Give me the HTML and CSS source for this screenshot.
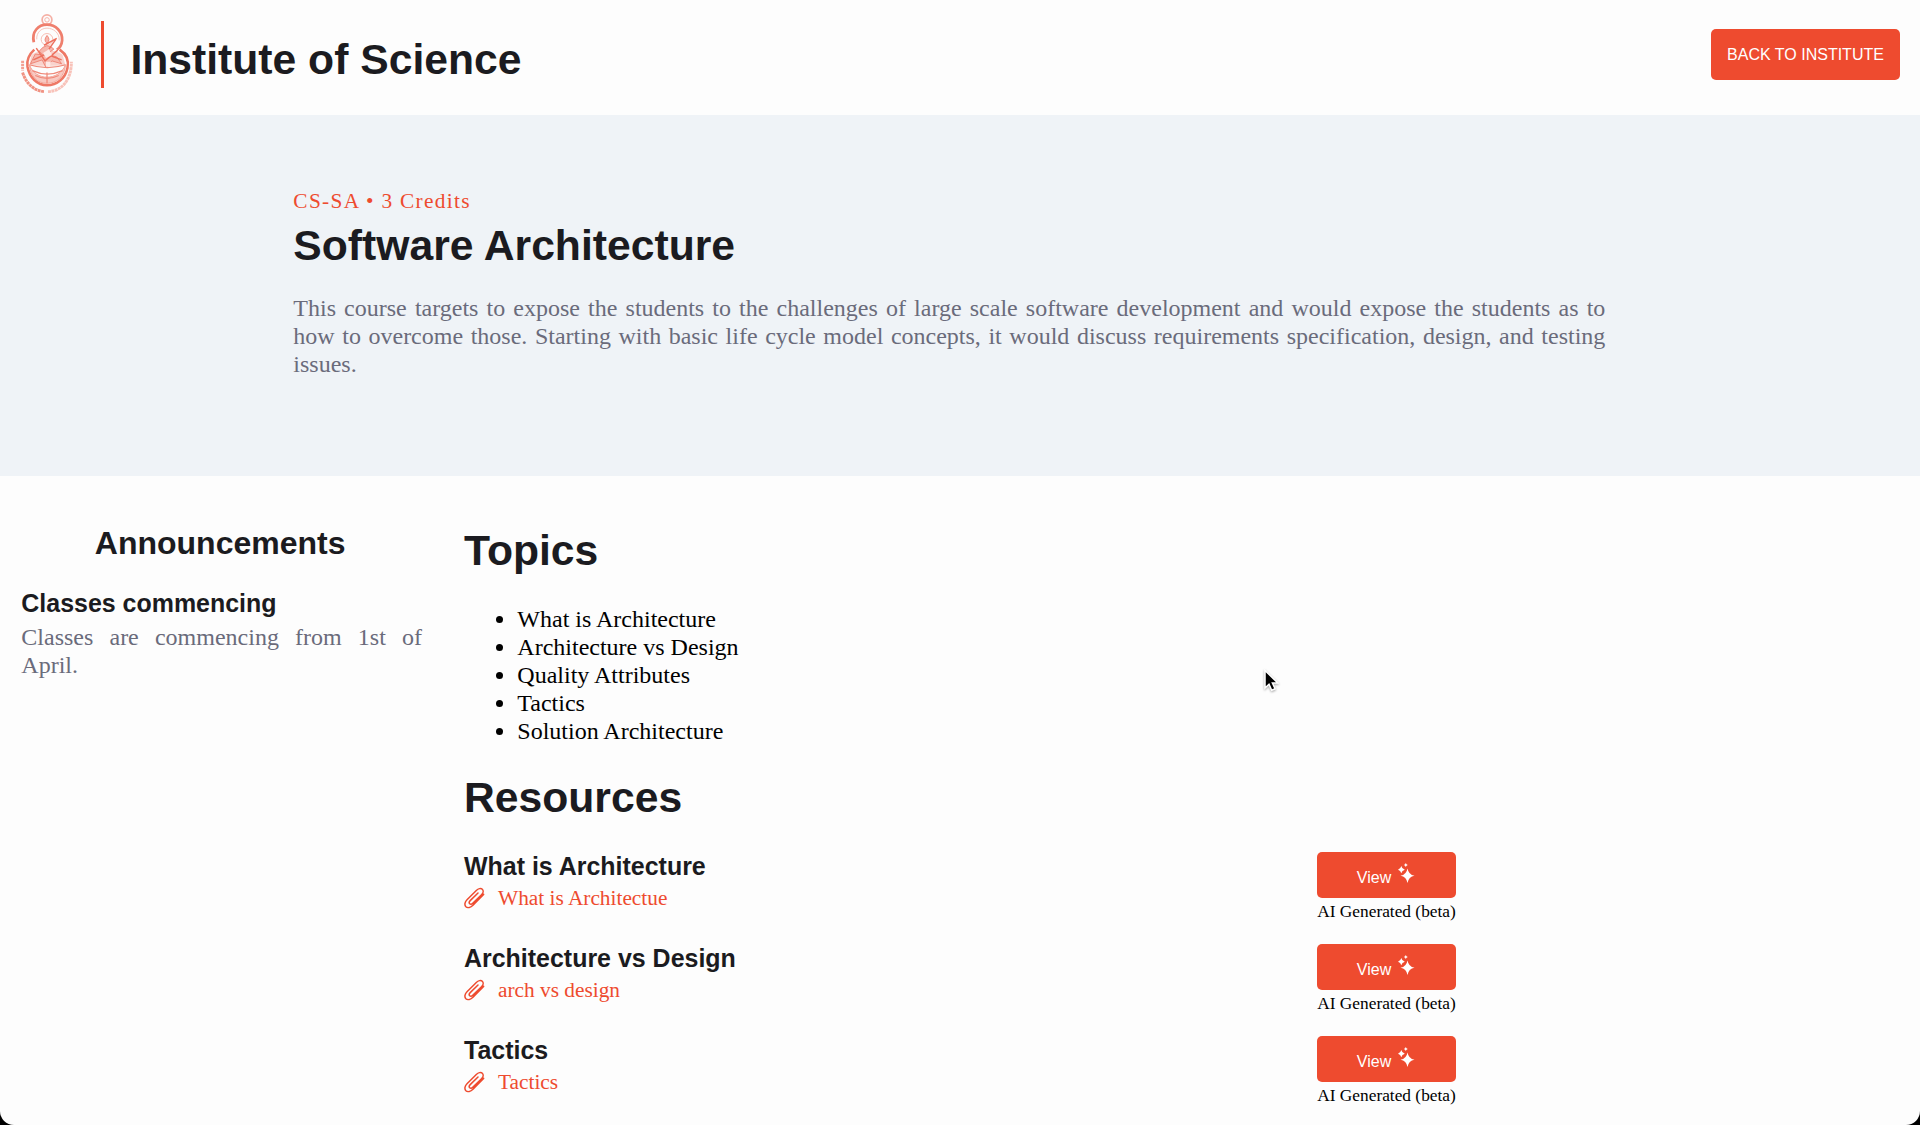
FILE: index.html
```html
<!DOCTYPE html>
<html lang="en">
<head>
<meta charset="utf-8">
<title>Software Architecture</title>
<link rel="stylesheet" href="styles.css">
</head>
<body>
<svg class="defs" width="0" height="0" aria-hidden="true">
  <symbol id="clip" viewBox="0 0 22 22">
    <path d="M19.600 7.400 9 18.200C6.700 20.400 3.600 21.400 1.900 19.800.2 18.100.8 15 3 12.800L12.300 3.500C14.300 1.500 16.900.9 18.300 2.300 19.700 3.700 19.300 6 17.500 7.800L9 16.100C7.900 17.200 6.500 17.500 5.700 16.700 4.900 15.900 5.200 14.600 6.200 13.600L14 6" fill="none" stroke="currentColor" stroke-width="1.500" stroke-linecap="round"/>
  </symbol>
  <symbol id="sparkle" viewBox="0 0 18 20">
    <path fill="currentColor" d="M9.500 5.500Q10.600 11.700 16.500 12.800 10.600 13.900 9.500 20 8.400 13.900 2.500 12.800 8.400 11.700 9.500 5.500ZM3.300 3Q4 6 6.800 6.700 4 7.400 3.300 10.300 2.600 7.400 0 6.700 2.600 6 3.300 3ZM7.800 0Q8.200 1.600 9.800 2 8.200 2.400 7.800 4 7.400 2.400 5.800 2 7.400 1.600 7.800 0Z"/>
  </symbol>
</svg>
<header class="header">
  <svg class="logo" viewBox="0 0 56 84" fill="none" stroke="#ec6a55">
    <g stroke-width="1">
      <circle cx="28" cy="6" r="5" stroke="#f5b0a5" stroke-width="1.800"/>
      <circle cx="28" cy="6" r="2.300" stroke="#f5b0a5"/>
      <path d="M14.500 29C12 18 19 11 28 11S44 18 43.500 27C43 32 41 35 38 36.500" stroke="#ef7f6d" stroke-width="2.800"/>
      <path d="M17.500 26C17 19 22 14.500 28 14.500S41 19 40.500 27" stroke="#f7c4bb"/>
      <path d="M15 36.500C10 41 7 47 8 54 10 65 18 73 28 73S47 66 49 55C51 46 46 40 41 36.500" stroke="#ee7865" stroke-width="2.600"/>
      <path d="M3 60C7 72 15 78.500 25 79.500" stroke="#f09282" stroke-width="3" stroke-dasharray="3 .5"/>
      <path d="M29 79.500C43 79 53 68 53 49" stroke="#f8c2b9" stroke-width="3" stroke-dasharray="3 .5"/>
      <path d="M3 48V58" stroke="#f3a093" stroke-width="3" stroke-dasharray="2.500 .6"/>
      <path d="M10 52C16 69 40 69 47 52C46 64 38 71 28 71S11 64 10 52Z" fill="#f8c9c1" stroke="#f3a396"/>
      <path d="M12 42C20 36 37 36 44 42L47 53H10Z" fill="#f9d3cd" stroke="none"/>
      <path d="M10 52Q28 58 47 52M13 58Q28 65 44 58M16 63Q28 69 40 63M28 60V71" stroke="#ef8a7a" stroke-width="1.300"/>
      <circle cx="28" cy="26" r="6" stroke="#f7bcb2"/>
      <path d="M28 22Q32 26 28 30 24 27 28 22ZM20 38Q28 28 35 36L28 41 38 44 43 51 33 48 27 55 23 47 11 51 16 41 24 42Z" fill="#f6b7ad" stroke="#ef8777"/>
      <path d="M25 32 38 25M30 36 37 26M17 35 26 48 39 37M14 47 27 41 43 47" stroke="#ed705d" stroke-width="1.500"/>
      <path d="M24 40 30 36 33 42 27 45ZM27 49 32 49 31 54 27 54Z" fill="#fdeae7" stroke="none"/>
    </g>
  </svg>
  <div class="divider"></div>
  <h1 class="brand">Institute of Science</h1>
  <button class="button back">BACK TO INSTITUTE</button>
</header>
<section class="hero">
  <div class="hero-inner">
    <div class="credits">CS-SA • 3 Credits</div>
    <h1>Software Architecture</h1>
    <p class="text">This course targets to expose the students to the challenges of large scale software development and would expose the students as to how to overcome those. Starting with basic life cycle model concepts, it would discuss requirements specification, design, and testing issues.</p>
  </div>
</section>
<main class="main">
  <aside class="announcements">
    <h2>Announcements</h2>
    <h3>Classes commencing</h3>
    <p class="text">Classes are commencing from 1st of April.</p>
  </aside>
  <section class="content">
    <h1>Topics</h1>
    <ul class="topics">
      <li>What is Architecture</li>
      <li>Architecture vs Design</li>
      <li>Quality Attributes</li>
      <li>Tactics</li>
      <li>Solution Architecture</li>
    </ul>
    <h1>Resources</h1>
    <div class="resources">
      <article class="resource">
        <div>
          <h3>What is Architecture</h3>
          <a class="link"><svg class="clip"><use href="#clip"/></svg>What is Architectue</a>
        </div>
        <div class="action">
          <button class="button view">View<svg class="sparkle"><use href="#sparkle"/></svg></button>
          <span class="note">AI Generated (beta)</span>
        </div>
      </article>
      <article class="resource">
        <div>
          <h3>Architecture vs Design</h3>
          <a class="link"><svg class="clip"><use href="#clip"/></svg>arch vs design</a>
        </div>
        <div class="action">
          <button class="button view">View<svg class="sparkle"><use href="#sparkle"/></svg></button>
          <span class="note">AI Generated (beta)</span>
        </div>
      </article>
      <article class="resource">
        <div>
          <h3>Tactics</h3>
          <a class="link"><svg class="clip"><use href="#clip"/></svg>Tactics</a>
        </div>
        <div class="action">
          <button class="button view">View<svg class="sparkle"><use href="#sparkle"/></svg></button>
          <span class="note">AI Generated (beta)</span>
        </div>
      </article>
    </div>
  </section>
</main>
<svg class="cursor" viewBox="0 0 16 24"><path d="M2 1.500V19l4-3.700 2.700 6 3.400-1.500-2.700-5.800h5.400Z" fill="#000" stroke="#fff" stroke-width="1.500"/></svg>
</body>
</html>
```
FILE: styles.css
```css
* {
  box-sizing: border-box;
}

html {
  background: #000;
}

body {
  margin: 0;
  height: 1125px;
  overflow: hidden;
  background: #fdfdfd;
  border-radius: 0 0 14px 14px;
  color: #000;
  font: 24px/28px "Liberation Serif", "Times New Roman", serif;
}

h1,
h2,
h3,
p,
ul {
  margin: 0;
}

h1,
h2,
h3 {
  color: #1b1b20;
  font-family: "Liberation Sans", Arial, sans-serif;
  font-weight: 700;
}

h1 {
  font-size: 42.67px;
  line-height: 48px;
}

h2 {
  font-size: 32px;
  line-height: 36px;
}

h3 {
  font-size: 24.96px;
  line-height: 28px;
}

.defs {
  display: block;
  height: 0;
}

.header {
  display: flex;
  align-items: flex-start;
  height: 115px;
  padding: 0 20px 0 19px;
}

.logo {
  width: 56px;
  height: 82px;
  margin-top: 14px;
}

.divider {
  width: 3px;
  height: 67px;
  margin: 21px 26px 0 26.400px;
  background: #ee4b2f;
}

.brand {
  margin-top: 35px;
}

.button {
  display: flex;
  align-items: center;
  justify-content: center;
  padding: 0;
  border: 0;
  border-radius: 5px;
  background: #ee4b2f;
  color: #fff;
  font: 16px/18px "Liberation Sans", Arial, sans-serif;
}

.back {
  width: 189px;
  height: 51px;
  margin: 29px 0 0 auto;
}

.hero {
  height: 361px;
  padding: 74px 314.670px 0 293.330px;
  background: #eff3f7;
}

.credits {
  margin-bottom: 8px;
  color: #ee4b2f;
  font-size: 21.33px;
  line-height: 24px;
  letter-spacing: 1.33px;
}

.hero .text {
  margin-top: 25px;
}

.text {
  color: #6a6b7b;
  text-align: justify;
}

.main {
  display: flex;
  gap: 42px;
}

.announcements {
  width: 422px;
  padding: 49px 0 0 21.330px;
}

.announcements h2 {
  margin: 0 3px 28px 0;
  text-align: center;
}

.announcements .text {
  margin-top: 6px;
}

.content {
  width: 992px;
  padding-top: 50px;
}

.topics {
  margin: 31px 0 28px;
  padding-left: 53.330px;
}

.resources {
  display: grid;
  gap: 22px;
  margin-top: 31px;
}

.resource {
  display: flex;
  justify-content: space-between;
  height: 70px;
}

.link {
  display: flex;
  align-items: center;
  gap: 12px;
  margin-top: 6px;
  color: #ee4b2f;
  font-size: 21.33px;
  line-height: 24px;
}

.clip {
  width: 22px;
  height: 22px;
}

.action {
  display: flex;
  flex-direction: column;
  align-items: center;
}

.view {
  width: 139px;
  height: 46px;
  gap: 7px;
  padding-top: 6px;
}

.sparkle {
  width: 18px;
  height: 20px;
  margin-bottom: 11px;
}

.note {
  margin-top: 4px;
  font-size: 17.33px;
  line-height: 20px;
  white-space: nowrap;
}

.cursor {
  position: absolute;
  left: 1263px;
  top: 669px;
  width: 16px;
  height: 24px;
  filter: drop-shadow(0 1px 1px rgba(0, 0, 0, .35));
}
```
